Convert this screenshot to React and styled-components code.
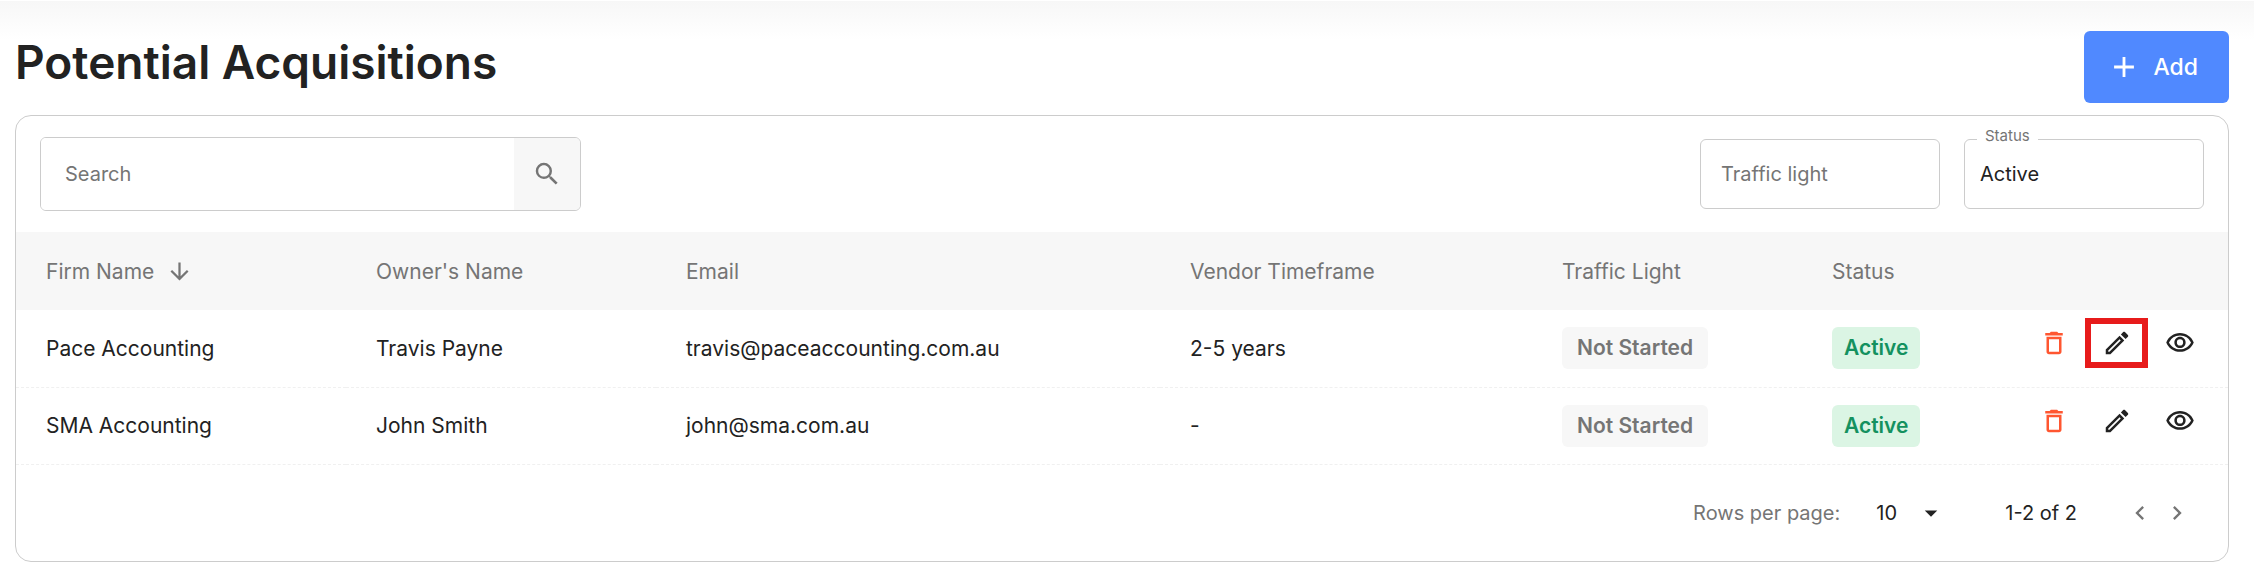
import React, { useState } from 'react';
import styled, { createGlobalStyle } from 'styled-components';
import {
  MdAdd,
  MdArrowDownward,
  MdArrowDropDown,
  MdChevronLeft,
  MdChevronRight,
  MdDeleteOutline,
  MdOutlineEdit,
  MdOutlineVisibility,
  MdSearch,
} from 'react-icons/md';

const GlobalStyle = createGlobalStyle`
  * {
    box-sizing: border-box;
  }

  body {
    margin: 0;
    background: #fff;
    color: #222;
    font-family: Inter, 'Open Sans', sans-serif;
    font-size: 21px;
  }

  button, input, select {
    font-family: inherit;
    color: inherit;
  }

  svg {
    display: block;
    flex-shrink: 0;
  }
`;

const Page = styled.main`
  padding: 31px 25px 9px 15px;
  background: linear-gradient(#f7f7f7, #fff) 0 1px / 100% 39px no-repeat;
`;

const PageHeader = styled.header`
  display: flex;
  justify-content: space-between;
  align-items: flex-start;
  margin-bottom: 12px;
`;

const Title = styled.h1`
  margin: 0;
  font-size: 46px;
  font-weight: 600;
  line-height: 62px;
`;

const AddButton = styled.button`
  display: flex;
  align-items: center;
  gap: 12px;
  height: 72px;
  padding: 0 31px 0 23px;
  border: none;
  border-radius: 6px;
  background: #5089ff;
  color: #fff;
  font-size: 23px;
  font-weight: 500;
  cursor: pointer;
`;

const Card = styled.section`
  border: 1px solid #ccc;
  border-radius: 16px;
  background: #fff;
`;

const Toolbar = styled.div`
  display: flex;
  justify-content: space-between;
  align-items: center;
  height: 116px;
  padding: 0 24px;
`;

const SearchBox = styled.form`
  display: flex;
  width: 541px;
  height: 74px;
  border: 1px solid #ccc;
  border-radius: 6px;
  overflow: hidden;
`;

const SearchInput = styled.input`
  flex: 1;
  min-width: 0;
  padding: 0 24px;
  border: none;
  outline: none;
  font-size: 20px;

  &::placeholder {
    color: #757575;
    opacity: 1;
  }
`;

const SearchButton = styled.button`
  display: flex;
  align-items: center;
  justify-content: center;
  width: 66px;
  border: none;
  background: #f7f7f7;
  color: #757575;
  cursor: pointer;
`;

const Filters = styled.div`
  display: flex;
  gap: 24px;
`;

const Field = styled.div`
  position: relative;
  width: 240px;
`;

const FieldLabel = styled.label`
  position: absolute;
  top: -13px;
  left: 13px;
  padding: 0 8px;
  background: #fff;
  color: #757575;
  font-size: 15px;
  line-height: 20px;
`;

const FieldSelect = styled.select`
  appearance: none;
  width: 100%;
  height: 70px;
  padding: 0 ${(props) => (props.$empty ? '20px' : '15px')};
  border: 1px solid #ccc;
  border-radius: 6px;
  background: #fff;
  color: ${(props) => (props.$empty ? '#757575' : '#222')};
  font-size: 20px;
`;

const Table = styled.table`
  width: 100%;
  table-layout: fixed;
  border-collapse: collapse;
`;

const Col = styled.col`
  width: ${(props) => props.$width};
`;

const HeadCell = styled.th`
  height: 78px;
  padding: 0 30px;
  background: #f7f7f7;
  color: #757575;
  font-weight: 400;
  text-align: left;
  white-space: nowrap;
`;

const SortButton = styled.button`
  display: flex;
  align-items: center;
  gap: 12px;
  padding: 0;
  border: none;
  background: none;
  font-size: 21px;
  cursor: pointer;
`;

const Cell = styled.td`
  height: 77px;
  padding: 0 30px;
  border-bottom: 1px dashed #f0f0f0;
  white-space: nowrap;
`;

const ActionCell = styled(Cell)`
  padding: 0 17px 10px;
`;

const Chip = styled.span`
  display: inline-block;
  padding: 0 ${(props) => (props.$active ? '12px' : '15px')};
  border-radius: 6px;
  background: ${(props) => (props.$active ? '#dbf5e4' : '#f7f7f7')};
  color: ${(props) => (props.$active ? '#14915f' : '#757575')};
  font-weight: 600;
  line-height: 42px;
  vertical-align: middle;
`;

const Actions = styled.div`
  display: flex;
  justify-content: flex-end;
`;

const ActionButton = styled.button`
  display: flex;
  align-items: center;
  justify-content: center;
  width: 63px;
  height: 50px;
  padding: 0;
  border: 6px solid ${(props) => (props.$highlight ? '#e71b1b' : 'transparent')};
  background: none;
  color: ${(props) => (props.$danger ? '#ff5630' : '#222')};
  cursor: pointer;
`;

const Pagination = styled.footer`
  display: flex;
  justify-content: flex-end;
  align-items: center;
  height: 96px;
  padding-right: 33px;
  font-size: 20px;
`;

const RowsLabel = styled.label`
  color: #757575;
`;

const RowsSelect = styled.div`
  display: flex;
  align-items: center;
  margin: 0 59px 0 36px;

  select {
    appearance: none;
    width: 70px;
    margin-right: -30px;
    padding: 0 30px 0 0;
    border: none;
    background: none;
    font-size: 20px;
  }

  svg {
    pointer-events: none;
  }
`;

const Range = styled.span`
  margin-right: 44px;
`;

const PageButton = styled.button`
  display: flex;
  justify-content: center;
  width: 37px;
  padding: 0;
  border: none;
  background: none;
  color: #757575;
`;

const firms = [
  {
    name: 'Pace Accounting',
    owner: 'Travis Payne',
    email: 'travis@paceaccounting.com.au',
    timeframe: '2-5 years',
    light: 'Not Started',
    status: 'Active',
    highlightEdit: true,
  },
  {
    name: 'SMA Accounting',
    owner: 'John Smith',
    email: 'john@sma.com.au',
    timeframe: '-',
    light: 'Not Started',
    status: 'Active',
  },
];

const FirmRow = ({ firm }) => (
  <tr>
    <Cell>{firm.name}</Cell>
    <Cell>{firm.owner}</Cell>
    <Cell>{firm.email}</Cell>
    <Cell>{firm.timeframe}</Cell>
    <Cell>
      <Chip>{firm.light}</Chip>
    </Cell>
    <Cell>
      <Chip $active>{firm.status}</Chip>
    </Cell>
    <ActionCell>
      <Actions>
        <ActionButton $danger aria-label="Delete">
          <MdDeleteOutline size={30} />
        </ActionButton>
        <ActionButton $highlight={firm.highlightEdit} aria-label="Edit">
          <MdOutlineEdit size={30} />
        </ActionButton>
        <ActionButton aria-label="View">
          <MdOutlineVisibility size={30} />
        </ActionButton>
      </Actions>
    </ActionCell>
  </tr>
);

const App = () => {
  const [search, setSearch] = useState('');
  const [light, setLight] = useState('');
  const [status, setStatus] = useState('Active');

  return (
    <>
      <GlobalStyle />
      <Page>
        <PageHeader>
          <Title>Potential Acquisitions</Title>
          <AddButton>
            <MdAdd size={34} />
            Add
          </AddButton>
        </PageHeader>

        <Card>
          <Toolbar>
            <SearchBox onSubmit={(e) => e.preventDefault()}>
              <SearchInput
                aria-label="Search"
                placeholder="Search"
                value={search}
                onChange={(e) => setSearch(e.target.value)}
              />
              <SearchButton aria-label="Submit search">
                <MdSearch size={30} />
              </SearchButton>
            </SearchBox>
            <Filters>
              <Field>
                <FieldSelect
                  aria-label="Traffic light"
                  $empty={!light}
                  value={light}
                  onChange={(e) => setLight(e.target.value)}
                >
                  <option value="">Traffic light</option>
                  <option>Not Started</option>
                </FieldSelect>
              </Field>
              <Field>
                <FieldLabel htmlFor="status">Status</FieldLabel>
                <FieldSelect id="status" value={status} onChange={(e) => setStatus(e.target.value)}>
                  <option>Active</option>
                  <option>Inactive</option>
                </FieldSelect>
              </Field>
            </Filters>
          </Toolbar>

          <Table>
            <colgroup>
              <Col $width="330px" />
              <Col $width="310px" />
              <Col $width="auto" />
              <Col $width="372px" />
              <Col $width="270px" />
              <Col $width="180px" />
              <Col $width="246px" />
            </colgroup>
            <thead>
              <tr>
                <HeadCell aria-sort="descending">
                  <SortButton>
                    Firm Name
                    <MdArrowDownward size={27} />
                  </SortButton>
                </HeadCell>
                <HeadCell>Owner's Name</HeadCell>
                <HeadCell>Email</HeadCell>
                <HeadCell>Vendor Timeframe</HeadCell>
                <HeadCell>Traffic Light</HeadCell>
                <HeadCell>Status</HeadCell>
                <HeadCell aria-label="Actions" />
              </tr>
            </thead>
            <tbody>
              {firms.map((firm) => (
                <FirmRow key={firm.email} firm={firm} />
              ))}
            </tbody>
          </Table>

          <Pagination>
            <RowsLabel htmlFor="rows">Rows per page:</RowsLabel>
            <RowsSelect>
              <select id="rows" defaultValue="10">
                <option>10</option>
                <option>25</option>
              </select>
              <MdArrowDropDown size={30} />
            </RowsSelect>
            <Range>1-2 of 2</Range>
            <PageButton aria-label="Previous page">
              <MdChevronLeft size={28} />
            </PageButton>
            <PageButton aria-label="Next page">
              <MdChevronRight size={28} />
            </PageButton>
          </Pagination>
        </Card>
      </Page>
    </>
  );
};

export default App;
